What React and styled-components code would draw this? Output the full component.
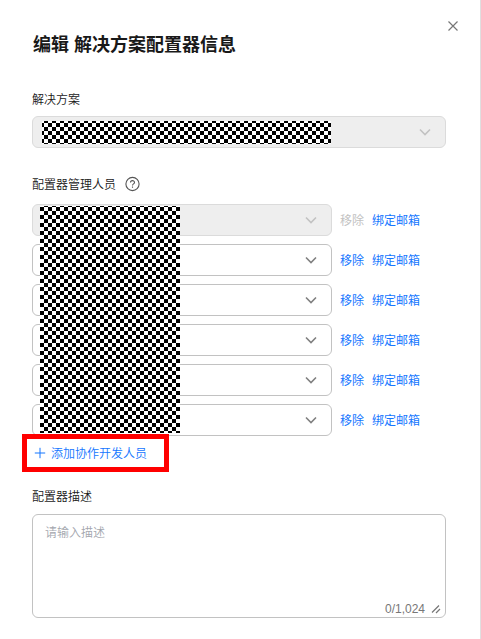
import React from "react";
import styled, { createGlobalStyle, css } from "styled-components";

const GlobalStyle = createGlobalStyle`
  * { box-sizing: border-box; }
  body {
    margin: 0;
    background: #fff;
    color: #191919;
    font: 12px/18px "Liberation Sans", "Noto Sans CJK SC", sans-serif;
  }
`;

const Drawer = styled.main`
  position: relative;
  width: 481px;
  height: 639px;
  padding: 33px 34px 0 32px;
  border-right: 1px solid #dfdfdf;
  overflow: hidden;
`;

const CloseButton = styled.button`
  position: absolute;
  top: 18px;
  right: 19px;
  width: 16px;
  height: 16px;
  padding: 0;
  border: 0;
  background: none;
  color: #777;
  svg { display: block; }
`;

const Title = styled.h1`
  margin: 0;
  padding-left: 1px;
  font-size: 18px;
  line-height: 24px;
  font-weight: 700;
  white-space: nowrap;
`;

const Field = styled.section`
  display: flex;
  flex-direction: column;
  margin-top: ${(p) => p.$gap}px;
`;

const Label = styled.div`
  display: flex;
  align-items: center;
  gap: 8px;
  height: 18px;
  margin-bottom: ${(p) => p.$space}px;
`;

const Text = styled.span`
  padding-top: 2px;
  font-weight: 350;
`;

const SelectBox = styled.div`
  display: flex;
  align-items: center;
  justify-content: flex-end;
  position: relative;
  width: ${(p) => p.$width}px;
  height: 32px;
  padding-right: 13px;
  border: 1px solid #c2c2c2;
  border-radius: 6px;
  color: #808080;
  ${(p) => p.$disabled && css`
    background: #eee;
    border-color: #dbdbdb;
    color: #c2c2c2;
  `}
`;

const MosaicCanvas = styled.svg`
  position: absolute;
  left: ${(p) => p.$left}px;
  top: ${(p) => p.$top}px;
  display: block;
`;

const People = styled.div`
  display: flex;
  flex-direction: column;
  gap: 8px;
  position: relative;
`;

const PersonRow = styled.div`
  display: flex;
  align-items: center;
  gap: 8px;
`;

const Action = styled.a`
  padding-top: 2px;
  font-weight: 400;
  color: ${(p) => (p.$disabled ? "#c2c2c2" : "#1476ff")};
  white-space: nowrap;
`;

const AddFrame = styled.div`
  display: flex;
  align-items: center;
  gap: 5px;
  position: relative;
  width: 147px;
  height: 38px;
  margin: -2px 0 0 -10px;
  padding-left: 7px;
  border: 5px solid #f00;
  color: #1476ff;
`;

const TextArea = styled.div`
  display: flex;
  flex-direction: column;
  justify-content: space-between;
  width: 414px;
  height: 104px;
  padding: 7px 4px 0 12px;
  border: 1px solid #c2c2c2;
  border-radius: 6px;
  color: #a3a6ae;
`;

const Counter = styled.div`
  display: flex;
  align-items: center;
  justify-content: flex-end;
  gap: 6px;
  height: 17px;
  color: #777;
`;

const Chevron = () => (
  <svg width="14" height="10" viewBox="0 0 14 10" fill="none" stroke="currentColor" strokeWidth="1.6">
    <path d="M2 2.5 7 7.5l5-5" />
  </svg>
);

const Mosaic = ({ id, left, top, width, height, x, y }) => (
  <MosaicCanvas $left={left} $top={top} width={width} height={height} shapeRendering="crispEdges">
    <defs>
      <pattern id={id} x={x} y={y} width="8" height="8" patternUnits="userSpaceOnUse">
        <rect width="8" height="8" fill="#fff" />
        <path d="M0 0h4v4H0zM4 4h4v4H4z" fill="#000" />
      </pattern>
    </defs>
    <rect width={width} height={height} fill={`url(#${id})`} />
  </MosaicCanvas>
);

const people = [0, 1, 2, 3, 4, 5];

export default function App() {
  return (
    <>
      <GlobalStyle />
      <Drawer>
        <CloseButton aria-label="关闭">
          <svg width="16" height="16" fill="none" stroke="currentColor" strokeWidth="1.2">
            <path d="m3.5 3.5 9 9m0-9-9 9" />
          </svg>
        </CloseButton>
        <Title>编辑 解决方案配置器信息</Title>
        <Field $gap={33}>
          <Label $space={8}><Text>解决方案</Text></Label>
          <SelectBox $width={414} $disabled>
            <Mosaic id="solution-mask" left={9} top={4} width={289} height={23} x={-2} y={2} />
            <Chevron />
          </SelectBox>
        </Field>
        <Field $gap={27}>
          <Label $space={11}>
            <Text>配置器管理人员</Text>
            <svg width="16" height="16" fill="none" stroke="#555" strokeWidth="1.1">
              <circle cx="8.5" cy="8" r="6.6" />
              <path d="M6.5 6.6c0-2.6 4-2.5 4-.2 0 1.5-2 1.4-2 3M8.5 10.6v1.2" />
            </svg>
          </Label>
          <People>
            {people.map((id) => (
              <PersonRow key={id}>
                <SelectBox $width={300} $disabled={id === 0}><Chevron /></SelectBox>
                <Action $disabled={id === 0}>移除</Action>
                <Action>绑定邮箱</Action>
              </PersonRow>
            ))}
            <Mosaic id="people-mask" left={8} top={2} width={140} height={227} x={0} y={1} />
          </People>
          <AddFrame>
            <svg width="12" height="12" fill="none" stroke="currentColor" strokeWidth="1">
              <path d="M6 .8v10.4M.8 6h10.4" />
            </svg>
            <Text>添加协作开发人员</Text>
          </AddFrame>
        </Field>
        <Field $gap={15}>
          <Label $space={9}><Text>配置器描述</Text></Label>
          <TextArea>
            <Text>请输入描述</Text>
            <Counter>
              0/1,024
              <svg width="10" height="10" fill="none" stroke="currentColor" strokeWidth="1.2">
                <path d="m1 8.5 7-7M5 9l4-4" />
              </svg>
            </Counter>
          </TextArea>
        </Field>
      </Drawer>
    </>
  );
}
